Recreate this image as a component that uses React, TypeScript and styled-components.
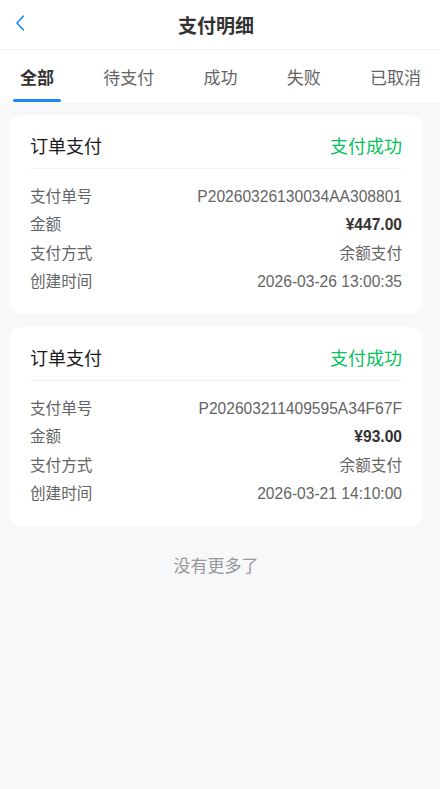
import React from 'react';
import styled, { createGlobalStyle } from 'styled-components';

const GlobalStyle = createGlobalStyle`
	html, body {
		margin: 0;
		padding: 0;
		background: #f7f8fa;
		font-family: 'Liberation Sans', 'Noto Sans CJK SC', sans-serif;
	}
`;

type Order = {
	id: string;
	amount: string;
	method: string;
	time: string;
};

const orders: Order[] = [
	{ id: 'P20260326130034AA308801', amount: '¥447.00', method: '余额支付', time: '2026-03-26 13:00:35' },
	{ id: 'P202603211409595A34F67F', amount: '¥93.00', method: '余额支付', time: '2026-03-21 14:10:00' },
];

const tabs = ['全部', '待支付', '成功', '失败', '已取消'];

function App() {
	return (
		<Page>
			<GlobalStyle />
			<NavBar>
				<BackButton aria-label='返回'>
					<svg width='10' height='16' viewBox='0 0 10 16' fill='none'>
						<path d='M8.3 1.2 L2 8 L8.3 14.8' stroke='#1989fa' strokeWidth='1.6' strokeLinecap='round' strokeLinejoin='round' />
					</svg>
				</BackButton>
				<NavTitle>支付明细</NavTitle>
			</NavBar>
			<TabBar>
				{tabs.map((t, i) => (
					<Tab key={t} $active={i === 0}>
						{t}
					</Tab>
				))}
			</TabBar>
			<List>
				{orders.map((o) => (
					<Card key={o.id}>
						<CardHead>
							<CardTitle>订单支付</CardTitle>
							<Status>支付成功</Status>
						</CardHead>
						<Rows>
							<Row>
								<Label>支付单号</Label>
								<Value>{o.id}</Value>
							</Row>
							<Row>
								<Label>金额</Label>
								<Value $strong>{o.amount}</Value>
							</Row>
							<Row>
								<Label>支付方式</Label>
								<Value>{o.method}</Value>
							</Row>
							<Row>
								<Label>创建时间</Label>
								<Value>{o.time}</Value>
							</Row>
						</Rows>
					</Card>
				))}
				<Finished>没有更多了</Finished>
			</List>
		</Page>
	);
}

const Page = styled.div`
	min-height: 100vh;
	background: #f7f8fa;
`;

const NavBar = styled.div`
	height: 49px;
	background: #fff;
	border-bottom: 1px solid #f0f0f2;
	display: flex;
	align-items: center;
	justify-content: center;
	position: relative;
`;

const BackButton = styled.div`
	position: absolute;
	left: 15px;
	top: 15px;
	display: flex;
`;

const NavTitle = styled.div`
	font-size: 19px;
	font-weight: bold;
	color: #323233;
	margin-right: 8px;
`;

const TabBar = styled.div`
	height: 53px;
	background: #fff;
	display: flex;
	justify-content: space-between;
	padding: 0 19px 0 20px;
`;

const Tab = styled.div<{ $active?: boolean }>`
	position: relative;
	display: flex;
	align-items: center;
	height: 100%;
	font-size: 17px;
	color: ${(p) => (p.$active ? '#323233' : '#646566')};
	font-weight: ${(p) => (p.$active ? 'bold' : 'normal')};
	&::after {
		content: '';
		display: ${(p) => (p.$active ? 'block' : 'none')};
		position: absolute;
		left: 50%;
		bottom: 1px;
		width: 48px;
		margin-left: -24px;
		height: 3px;
		border-radius: 3px;
		background: #1989fa;
	}
`;

const List = styled.div`
	padding: 12px 18px 0 10px;
	display: flex;
	flex-direction: column;
	gap: 13px;
`;

const Card = styled.div`
	background: #fff;
	border-radius: 12px;
	padding: 0 20px 18px;
`;

const CardHead = styled.div`
	display: flex;
	justify-content: space-between;
	align-items: center;
	padding: 19px 0 8px;
	line-height: 26px;
	border-bottom: 1px solid #f2f3f5;
`;

const CardTitle = styled.div`
	font-size: 18px;
	color: #1a1a1a;
`;

const Status = styled.div`
	font-size: 18px;
	color: #07c160;
`;

const Rows = styled.div`
	padding-top: 14px;
`;

const Row = styled.div`
	display: flex;
	justify-content: space-between;
	line-height: 28.3px;
	font-size: 15.6px;
`;

const Label = styled.span`
	color: #646566;
`;

const Value = styled.span<{ $strong?: boolean }>`
	color: ${(p) => (p.$strong ? '#323233' : '#646566')};
	font-weight: ${(p) => (p.$strong ? 'bold' : 'normal')};
`;

const Finished = styled.div`
	text-align: center;
	font-size: 17px;
	color: #969799;
	padding: 16px 0;
	line-height: 24px;
`;

export default App;
